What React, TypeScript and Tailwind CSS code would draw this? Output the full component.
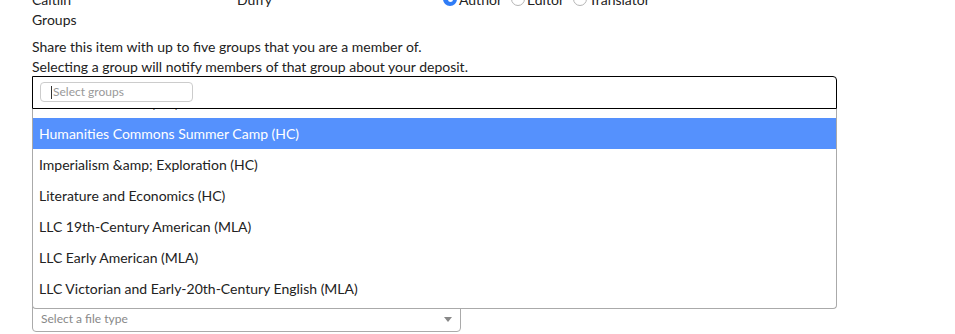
const groups = [
  "HASTAC Scholars (HC)",
  "Humanities Commons Summer Camp (HC)",
  "Imperialism &amp; Exploration (HC)",
  "Literature and Economics (HC)",
  "LLC 19th-Century American (MLA)",
  "LLC Early American (MLA)",
  "LLC Victorian and Early-20th-Century English (MLA)",
];

const Radio = ({ checked = false, label }: { checked?: boolean; label: string }) => (
  <label className="flex items-center gap-[2px] mr-[9px]">
    {checked ? (
      <span className="w-[14px] h-[14px] rounded-full bg-[#2f7cf6] flex items-center justify-center">
        <span className="w-[5px] h-[5px] rounded-full bg-white" />
      </span>
    ) : (
      <span className="w-[14px] h-[14px] rounded-full border border-[#b5b5b5] bg-white" />
    )}
    <span>{label}</span>
  </label>
);

export default function App() {
  return (
    <div className="w-[955px] h-[334px] overflow-hidden bg-white font-['Lato',sans-serif] text-[14px] text-[#222]">
      <div className="pl-8 -mt-[11px]">
        <div className="flex items-center h-[20px]">
          <span className="w-[205px]">Caitlin</span>
          <span className="w-[206px]">Duffy</span>
          <Radio checked label="Author" />
          <Radio label="Editor" />
          <Radio label="Translator" />
        </div>

        <div className="mt-[1px] leading-[20px]">Groups</div>

        <p className="mt-[7px] leading-[20px]">
          Share this item with up to five groups that you are a member of.
          <br />
          Selecting a group will notify members of that group about your deposit.
        </p>

        <div className="relative w-[805px] -mt-px">
          <div className="h-[33px] border border-black rounded-tr-[4px] pl-[7px] pt-[5px] bg-white">
            <div className="w-[153px] h-[20px] border border-[#ccc] rounded-[4px] flex items-center pl-[10px] text-[12px] text-[#999]">
              <span className="w-px h-[13px] bg-[#333] mr-px" />
              Select groups
            </div>
          </div>

          <div className="absolute left-0 top-[33px] w-[805px] h-[200px] overflow-hidden bg-white border border-t-0 border-[#aaa] rounded-b-[4px] z-10">
            <ul className="-mt-[22px]">
              {groups.map((g, i) => (
                <li
                  key={g}
                  className={`h-[31px] flex items-center pl-[6px] ${
                    i === 1 ? "bg-[#5591fd] text-white" : "text-[#222]"
                  }`}
                >
                  {g}
                </li>
              ))}
            </ul>
          </div>

          <div className="mt-[194px] w-[429px] h-[29px] border border-[#aaa] rounded-[4px] flex items-end justify-between pl-[8px] pr-[8px] pb-[3px] text-[12px] text-[#888]">
            <span>Select a file type</span>
            <span className="mb-[6px] w-0 h-0 border-l-[4px] border-r-[4px] border-t-[5px] border-l-transparent border-r-transparent border-t-[#888]" />
          </div>
        </div>
      </div>
    </div>
  );
}
